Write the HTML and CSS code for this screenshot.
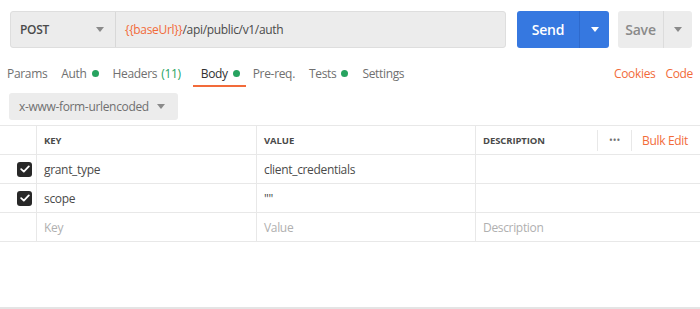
FILE: index.html
```html
<!DOCTYPE html>
<html>
<head>
<meta charset="utf-8">
<link rel="stylesheet" href="styles.css">
</head>
<body>
<div class="page">
  <div class="topbar">
    <div class="urlbox">
      <div class="method"><span>POST</span><span class="caret"></span></div>
      <div class="url"><span class="var">{{baseUrl}}</span>/api/public/v1/auth</div>
    </div>
    <div class="send"><span class="send-main">Send</span><span class="send-arrow"><span class="caret white"></span></span></div>
    <div class="save"><span class="save-main">Save</span><span class="save-arrow"><span class="caret"></span></span></div>
  </div>
  <div class="tabs">
    <div class="tabs-left">
      <span class="tab">Params</span>
      <span class="tab">Auth <i class="dot"></i></span>
      <span class="tab">Headers <span class="count">(11)</span></span>
      <span class="tab active">Body <i class="dot"></i></span>
      <span class="tab">Pre-req.</span>
      <span class="tab">Tests <i class="dot"></i></span>
      <span class="tab">Settings</span>
    </div>
    <div class="tabs-right">
      <span class="link">Cookies</span>
      <span class="link">Code</span>
    </div>
  </div>
  <div class="bodytype">
    <div class="select"><span>x-www-form-urlencoded</span><span class="caret"></span></div>
  </div>
  <div class="table">
    <div class="row head">
      <div class="cell chk"></div>
      <div class="cell">KEY</div>
      <div class="cell">VALUE</div>
      <div class="cell desc-head">
        <span class="desc-title">DESCRIPTION</span>
        <span class="more">•••</span>
        <span class="bulk">Bulk Edit</span>
      </div>
    </div>
    <div class="row">
      <div class="cell chk"><span class="box"><svg width="10" height="8" viewBox="0 0 10 8"><path d="M1.2 4.2 L3.8 6.6 L8.8 1.4" fill="none" stroke="#fff" stroke-width="1.8" stroke-linecap="round" stroke-linejoin="round"/></svg></span></div>
      <div class="cell">grant_type</div>
      <div class="cell">client_credentials</div>
      <div class="cell"></div>
    </div>
    <div class="row">
      <div class="cell chk"><span class="box"><svg width="10" height="8" viewBox="0 0 10 8"><path d="M1.2 4.2 L3.8 6.6 L8.8 1.4" fill="none" stroke="#fff" stroke-width="1.8" stroke-linecap="round" stroke-linejoin="round"/></svg></span></div>
      <div class="cell">scope</div>
      <div class="cell">""</div>
      <div class="cell"></div>
    </div>
    <div class="row ph">
      <div class="cell chk"></div>
      <div class="cell">Key</div>
      <div class="cell">Value</div>
      <div class="cell">Description</div>
    </div>
  </div>
  <div class="filler"></div>
</div>
</body>
</html>
```
FILE: styles.css
```css
* { box-sizing: border-box; }
html, body { margin: 0; padding: 0; background: #fff; }
body {
  font-family: "Open Sans", "Liberation Sans", sans-serif;
  font-size: 12px;
  letter-spacing: -0.33px;
  color: #4a4a4a;
  width: 700px;
  height: 309px;
  overflow: hidden;
}
.page { display: flex; flex-direction: column; height: 309px; }

.topbar {
  display: flex;
  padding: 11px 8px 0 10px;
  height: 48px;
}
.urlbox {
  width: 496px;
  height: 37px;
  background: #ececec;
  border: 1px solid #dedede;
  border-radius: 3px;
  display: flex;
  align-items: stretch;
}
.method {
  width: 105px;
  border-right: 1px solid #d8d8d8;
  display: flex;
  align-items: center;
  justify-content: space-between;
  padding: 0 11px 0 9px;
  font-weight: 600;
  color: #4a4a4a;
}
.caret {
  width: 0; height: 0;
  border-left: 4px solid transparent;
  border-right: 4px solid transparent;
  border-top: 5px solid #8a8a8a;
  display: inline-block;
}
.caret.white { border-top-color: #fff; }
.url {
  display: flex; align-items: center;
  padding-left: 9px;
  color: #4a4a4a;
  font-size: 12px;
}
.var { color: #f26b3a; }

.send {
  margin-left: 11px;
  width: 92px;
  height: 37px;
  background: #3678e0;
  border-radius: 3px;
  display: flex;
  color: #fff;
  font-weight: 600;
  font-size: 14px;
  letter-spacing: -0.2px;
}
.send-main {
  width: 63px;
  display: flex; align-items: center; justify-content: center;
  border-right: 1px solid #2e6acd;
}
.send-arrow { flex: 1; display: flex; align-items: center; justify-content: center; }
.save {
  margin-left: 9px;
  width: 74px;
  height: 37px;
  background: #ececec;
  border-radius: 3px;
  display: flex;
  color: #8a8a8a;
  font-weight: 600;
  font-size: 14px;
  letter-spacing: -0.2px;
}
.save-main {
  width: 46px;
  display: flex; align-items: center; justify-content: center;
  border-right: 1px solid #dcdcdc;
}
.save-arrow { flex: 1; display: flex; align-items: center; justify-content: center; }

.tabs {
  display: flex;
  justify-content: space-between;
  padding: 0 7px 0 7px;
  height: 39px;
}
.tabs-left { display: flex; gap: 14px; }
.tab {
  display: flex; align-items: center;
  height: 39px;
  padding-top: 11px;
  color: #707070;
  position: relative;
}
.tab.active { color: #303030; padding: 11px 6px 0 8px; margin: 0 -7px 0 -2px; }
.tab.active::after {
  content: ""; position: absolute; left: 0; right: 0; bottom: 0;
  height: 2px; background: #f26b3a;
}
.count { color: #26a35f; margin-left: 4px; }
.dot {
  width: 7px; height: 7px; border-radius: 50%;
  background: #26a35f; display: inline-block; margin-left: 5px;
}
.tabs-right { display: flex; gap: 10px; height: 39px; align-items: center; padding-top: 11px; }
.link { color: #f26b3a; }

.bodytype { padding: 6px 0 0 9px; height: 38px; }
.select {
  width: 169px;
  height: 27px;
  background: #ececec;
  border-radius: 3px;
  display: flex; align-items: center; justify-content: space-between;
  padding: 0 13px 0 10px;
  color: #707070;
  white-space: nowrap;
}

.table { border-top: 1px solid #e8e8e8; }
.row {
  display: grid;
  grid-template-columns: 37px 220px 219px 1fr;
  height: 29px;
  border-bottom: 1px solid #e8e8e8;
}
.cell {
  border-right: 1px solid #e8e8e8;
  display: flex; align-items: center;
  padding-left: 7px;
  color: #4a4a4a;
  white-space: nowrap;
}
.cell:last-child { border-right: none; }
.row.head .cell { font-size: 9.5px; font-weight: 700; color: #4a4a4a; letter-spacing: -0.1px; }
.row.ph .cell { color: #b0b0b0; }
.chk { justify-content: flex-end; padding: 0 4px 0 0; }
.box {
  width: 15px; height: 15px; border-radius: 3px;
  background: #282828;
  display: flex; align-items: center; justify-content: center;
}
.desc-head { padding-right: 0; }
.desc-title { flex: 1; }
.row.head .more {
  font-size: 10px; letter-spacing: 0; color: #707070; font-weight: 400;
  border-left: 1px solid #e8e8e8; border-right: 1px solid #e8e8e8;
  width: 35px; height: 21px;
  display: flex; align-items: center; justify-content: center;
}
.row.head .bulk { font-size: 12px; font-weight: 400; color: #f26b3a; padding: 0 12px 0 10px; letter-spacing: -0.33px; }

.filler { flex: 1; border-bottom: 2px solid #e4e4e4; }
```
